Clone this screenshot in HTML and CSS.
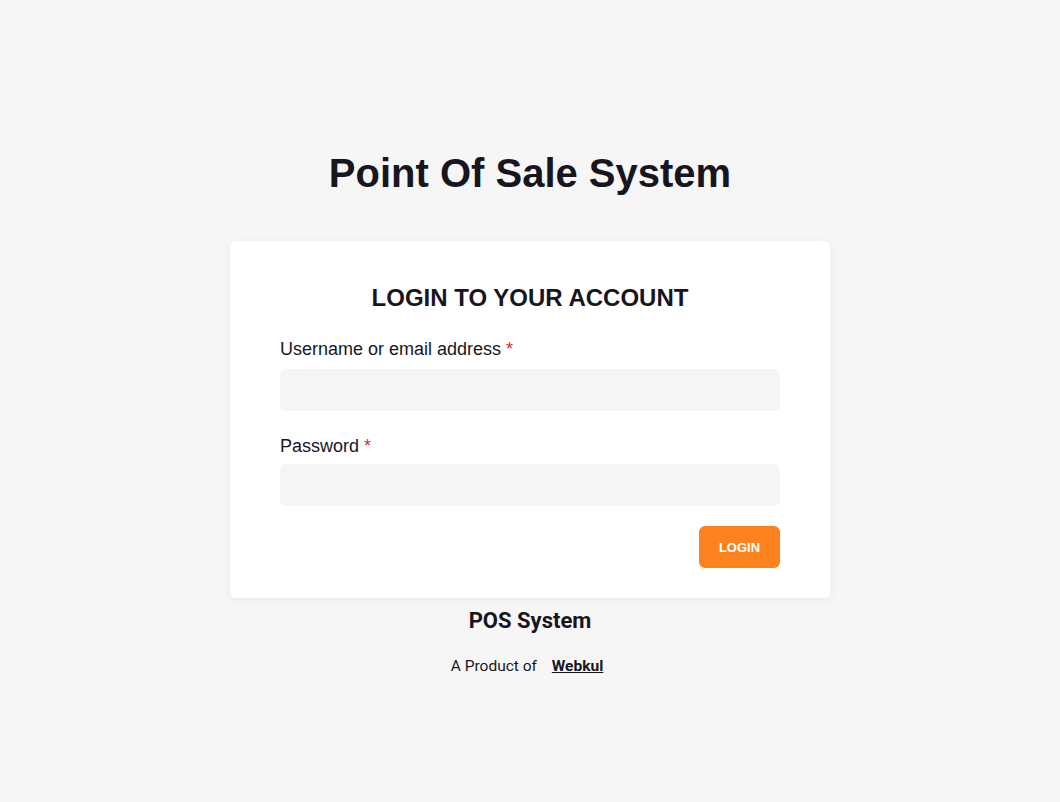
FILE: index.html
```html
<!DOCTYPE html>
<html lang="en">

<head>
    <meta charset="UTF-8">
    <meta name="viewport" content="width=device-width, initial-scale=1.0">
    <title>Point Of Sale System</title>
    <link rel="stylesheet" href="styles.css">
</head>

<body>
    <div class="page">
        <h1 class="title">Point Of Sale System</h1>

        <div class="login-card">
            <h2>LOGIN TO YOUR ACCOUNT</h2>
            <form class="login-form" onsubmit="return false">
                <div class="field">
                    <label for="username">Username or email address <span class="req">*</span></label>
                    <input type="text" id="username">
                </div>
                <div class="field">
                    <label for="password">Password <span class="req">*</span></label>
                    <input type="password" id="password">
                </div>
                <div class="actions">
                    <button type="submit">LOGIN</button>
                </div>
            </form>
        </div>

        <div class="footer">
            <h3>POS System</h3>
            <p>A Product of <a href="#">Webkul</a></p>
        </div>
    </div>
</body>

</html>
```

FILE: styles.css
```css
body {
    margin: 0;
    background-color: #f6f6f6;
    font-family: "Liberation Sans", Arial, sans-serif;
    color: #17161f;
}

.page {
    display: flex;
    flex-direction: column;
    align-items: center;
    padding-top: 149px;
}

.title {
    margin: 0;
    font-size: 40px;
    line-height: 48px;
    font-weight: bold;
}

.login-card {
    background-color: white;
    width: 600px;
    box-sizing: border-box;
    margin-top: 44px;
    padding: 43px 50px 30px;
    border-radius: 6px;
    box-shadow: 0 2px 10px rgba(0, 0, 0, 0.06);
}

.login-card h2 {
    margin: 0 0 26px;
    text-align: center;
    font-size: 24px;
    line-height: 28px;
    font-weight: bold;
}

.field {
    display: flex;
    flex-direction: column;
    margin-bottom: 22px;
}

.field + .field {
    margin-bottom: 20px;
}

.field label {
    font-size: 18px;
    line-height: 22px;
    margin-bottom: 9px;
}

.field + .field label {
    margin-top: 2px;
    margin-bottom: 7px;
}

.req {
    color: #e0262f;
}

.field input {
    height: 42px;
    border: none;
    border-radius: 6px;
    background-color: #f5f5f5;
    padding: 0 12px;
    font-size: 16px;
    outline: none;
}

.actions {
    display: flex;
    justify-content: flex-end;
}

.actions button {
    width: 81px;
    height: 42px;
    border: none;
    border-radius: 6px;
    background-color: #fd821d;
    color: white;
    font-family: "Liberation Sans", Arial, sans-serif;
    font-size: 13px;
    font-weight: bold;
    cursor: pointer;
}

.footer {
    text-align: center;
    font-family: Roboto, sans-serif;
}

.footer h3 {
    margin: 10px 0 0;
    font-size: 22px;
    line-height: 26px;
    font-weight: bold;
}

.footer p {
    margin: 22px 0 0;
    padding-right: 6px;
    font-size: 15.5px;
    line-height: 20px;
}

.footer a {
    color: #17161f;
    font-weight: bold;
    margin-left: 11px;
}
```
